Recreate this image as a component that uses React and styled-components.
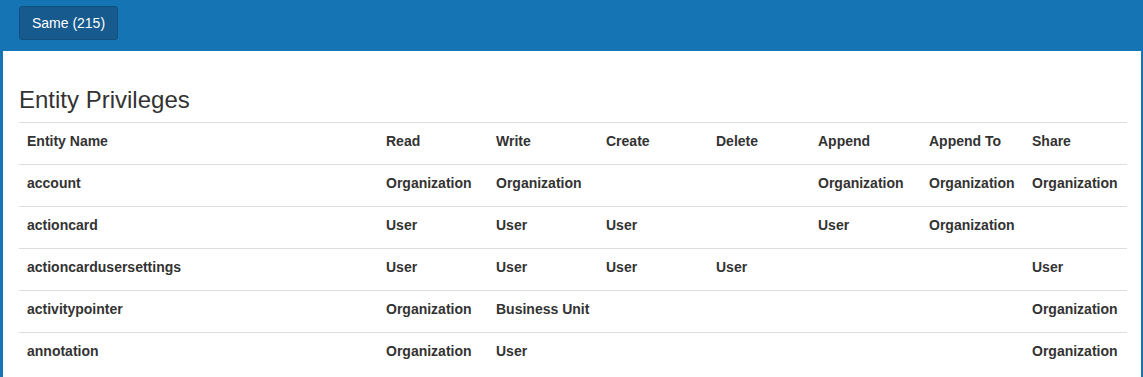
import React from "react";
import styled, { createGlobalStyle } from "styled-components";

const Global = createGlobalStyle`
  html, body { margin: 0; padding: 0; background: #fff; }
  body { font-family: "Liberation Sans", Arial, sans-serif; color: #333; }
`;

const Panel = styled.div`
  width: 1143px;
  box-sizing: border-box;
  border-left: 3px solid #1474b4;
  border-right: 2px solid #1474b4;
  min-height: 377px;
`;

const Heading = styled.div`
  background: #1474b4;
  height: 51px;
  box-sizing: border-box;
  padding: 6px 16px 0 19px;
  margin-left: -3px;
  margin-right: -2px;
`;

const Button = styled.button`
  height: 34px;
  width: 99px;
  box-sizing: border-box;
  background: #165a8e;
  color: #fff;
  border: 1px solid #124f7e;
  border-radius: 3px;
  font-family: "Liberation Sans", Arial, sans-serif;
  font-size: 14px;
  padding: 0;
`;

const Body = styled.div`
  padding: 0 13px 0 16px;
`;

const Title = styled.h3`
  margin: 0;
  padding: 31px 0 5px;
  font-size: 24px;
  font-weight: 400;
  line-height: 35px;
  color: #333;
`;

const Table = styled.table`
  width: 1108px;
  table-layout: fixed;
  border-collapse: collapse;
  font-size: 14px;
`;

const Cell = styled.td`
  border-top: 1px solid #ddd;
  padding: 8px 8px 13px;
  height: 41px;
  box-sizing: border-box;
  font-weight: 700;
  text-align: left;
  white-space: nowrap;
  vertical-align: top;
  line-height: 20px;
`;

const HeadCell = styled(Cell).attrs({ as: "th" })``;

const widths = [359, 110, 110, 110, 102, 111, 103, 103];
const cols = ["Entity Name", "Read", "Write", "Create", "Delete", "Append", "Append To", "Share"];
const rows = [
  ["account", "Organization", "Organization", "", "", "Organization", "Organization", "Organization"],
  ["actioncard", "User", "User", "User", "", "User", "Organization", ""],
  ["actioncardusersettings", "User", "User", "User", "User", "", "", "User"],
  ["activitypointer", "Organization", "Business Unit", "", "", "", "", "Organization"],
  ["annotation", "Organization", "User", "", "", "", "", "Organization"],
];

export default function App() {
  return (
    <>
      <Global />
      <Panel>
        <Heading>
          <Button>Same (215)</Button>
        </Heading>
        <Body>
          <Title>Entity Privileges</Title>
          <Table>
            <colgroup>
              {widths.map((w, i) => (
                <col key={i} style={{ width: w }} />
              ))}
            </colgroup>
            <thead>
              <tr>
                {cols.map((c) => (
                  <HeadCell key={c}>{c}</HeadCell>
                ))}
              </tr>
            </thead>
            <tbody>
              {rows.map((r) => (
                <tr key={r[0]}>
                  {r.map((v, i) => (
                    <Cell key={i}>{v}</Cell>
                  ))}
                </tr>
              ))}
            </tbody>
          </Table>
        </Body>
      </Panel>
    </>
  );
}
